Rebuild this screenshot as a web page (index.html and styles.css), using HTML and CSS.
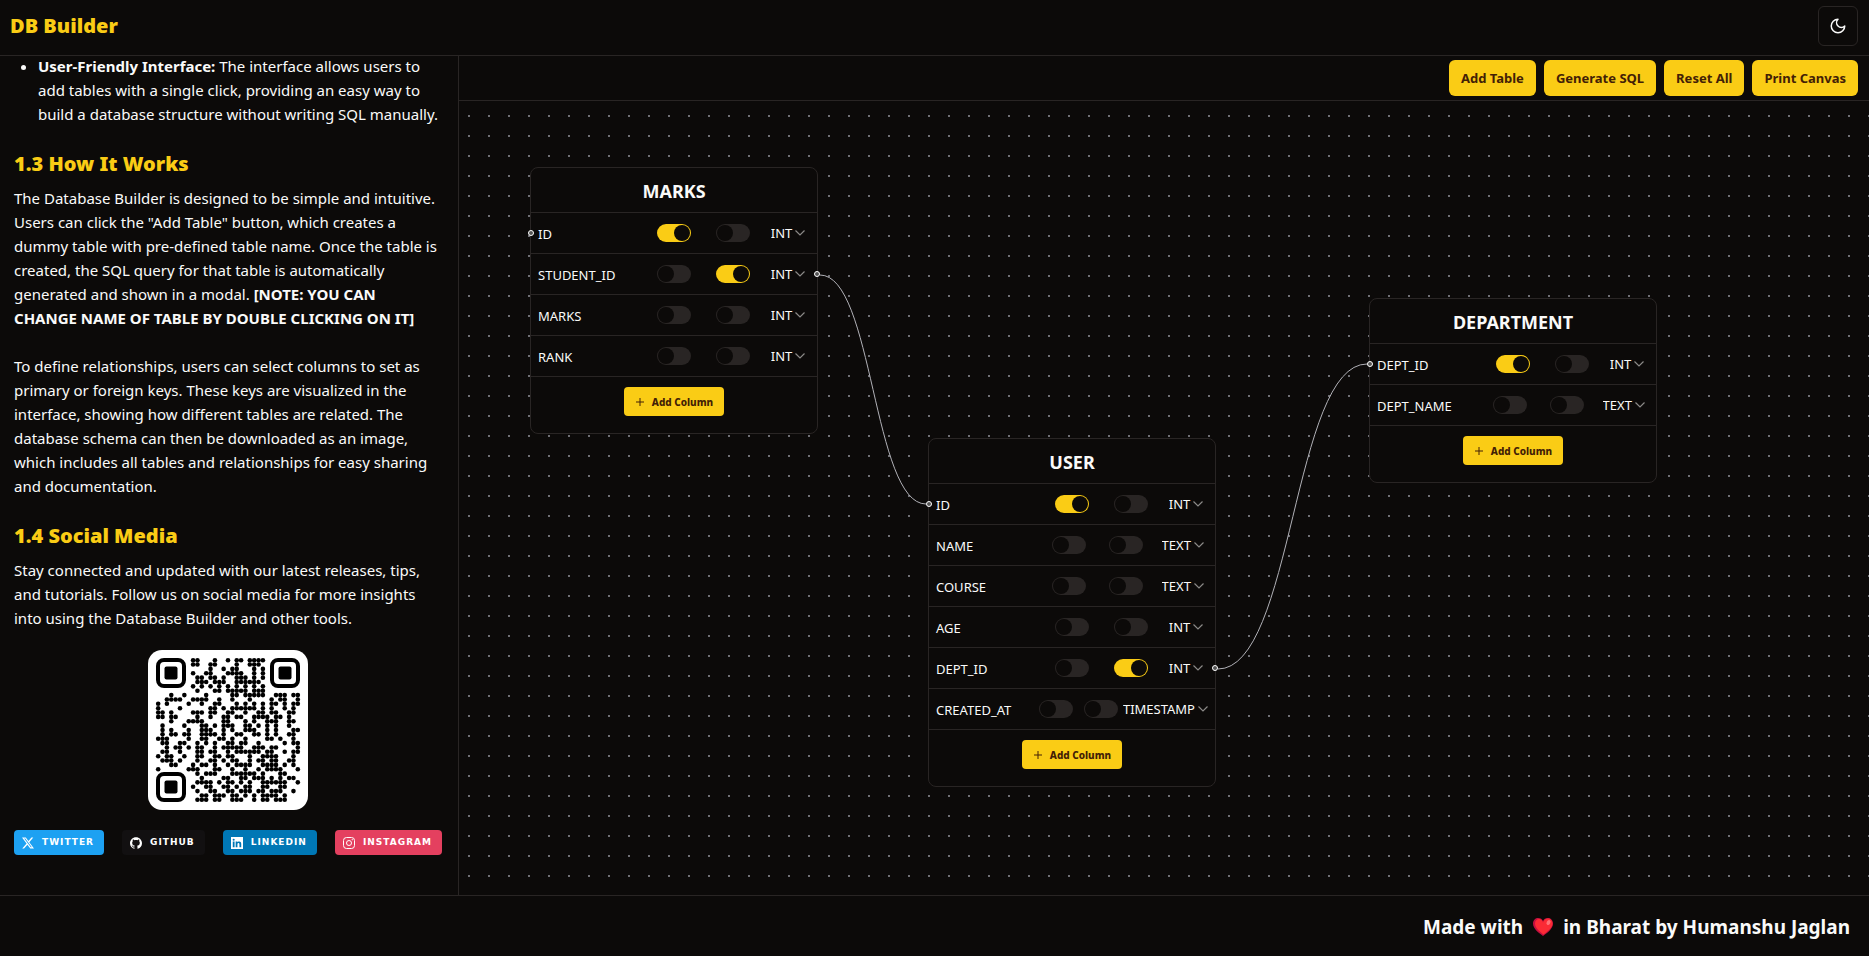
FILE: index.html
```html
<!DOCTYPE html>
<html lang="en">
<head>
<meta charset="utf-8">
<title>DB Builder</title>
<link rel="stylesheet" href="styles.css">
</head>
<body>
<svg class="sprite" aria-hidden="true">
  <symbol id="chevron" viewBox="0 0 10 6"><path d="M.5 .5l4.500 4.500 4.500-4.500" fill="none" stroke="currentColor" stroke-width="1.200"/></symbol>
  <symbol id="plus" viewBox="0 0 8 8"><path d="M4 0v8M0 4h8" fill="none" stroke="currentColor"/></symbol>
</svg>

<header class="topbar">
  <h1 class="brand">DB Builder</h1>
  <button class="theme-button" type="button" aria-label="Toggle theme">
    <svg width="18" height="18" viewBox="0 0 24 24" fill="none" stroke="currentColor" stroke-width="2" stroke-linecap="round" stroke-linejoin="round"><path d="M12 3a6 6 0 0 0 9 9 9 9 0 1 1-9-9Z"/></svg>
  </button>
</header>

<main class="workspace">
  <aside class="docs">
    <ul class="docs-list">
      <li><strong>User-Friendly Interface:</strong> The interface allows users to<br>add tables with a single click, providing an easy way to<br>build a database structure without writing SQL manually.</li>
    </ul>
    <section class="docs-section">
      <h2 class="docs-title">1.3 How It Works</h2>
      <p class="docs-text">The Database Builder is designed to be simple and intuitive.<br>Users can click the "Add Table" button, which creates a<br>dummy table with pre-defined table name. Once the table is<br>created, the SQL query for that table is automatically<br>generated and shown in a modal. <strong>[NOTE: YOU CAN<br>CHANGE NAME OF TABLE BY DOUBLE CLICKING ON IT]</strong></p>
      <p class="docs-text docs-text-next">To define relationships, users can select columns to set as<br>primary or foreign keys. These keys are visualized in the<br>interface, showing how different tables are related. The<br>database schema can then be downloaded as an image,<br>which includes all tables and relationships for easy sharing<br>and documentation.</p>
    </section>
    <section class="docs-section">
      <h2 class="docs-title">1.4 Social Media</h2>
      <p class="docs-text">Stay connected and updated with our latest releases, tips,<br>and tutorials. Follow us on social media for more insights<br>into using the Database Builder and other tools.</p>
    </section>
    <svg class="qr" viewBox="0 0 160 160" role="img" aria-label="QR code">
      <rect width="160" height="160" rx="14" fill="#fff"/>
      <g fill="none" stroke="#000" stroke-width="4">
        <rect x="10" y="10" width="26" height="26" rx="6"/>
        <rect x="124" y="10" width="26" height="26" rx="6"/>
        <rect x="10" y="124" width="26" height="26" rx="6"/>
      </g>
      <rect x="16.500" y="16.500" width="13" height="13" rx="2"/>
      <rect x="130.500" y="16.500" width="13" height="13" rx="2"/>
      <rect x="16.500" y="130.500" width="13" height="13" rx="2"/>
      <g id="qr-dots"></g>
    </svg>
    <nav class="social" aria-label="Social media">
      <a class="badge twitter" href="#twitter"><svg viewBox="0 0 24 24"><path fill="currentColor" d="M18.901 1.153h3.680l-8.040 9.190L24 22.846h-7.406l-5.800-7.584-6.638 7.584H.474l8.600-9.830L0 1.154h7.594l5.243 6.932ZM17.610 20.644h2.039L6.486 3.240H4.298Z"/></svg>TWITTER</a>
      <a class="badge github" href="#github"><svg viewBox="0 0 24 24"><path fill="currentColor" d="M12 .297c-6.630 0-12 5.373-12 12 0 5.303 3.438 9.800 8.205 11.385.6.113.82-.258.82-.577 0-.285-.010-1.040-.015-2.040-3.338.724-4.042-1.610-4.042-1.610C4.422 18.070 3.633 17.700 3.633 17.700c-1.087-.744.084-.729.084-.729 1.205.084 1.838 1.236 1.838 1.236 1.070 1.835 2.809 1.305 3.495.998.108-.776.417-1.305.76-1.605-2.665-.3-5.466-1.332-5.466-5.930 0-1.310.465-2.380 1.235-3.220-.135-.303-.540-1.523.105-3.176 0 0 1.005-.322 3.300 1.230.96-.267 1.980-.399 3-.405 1.020.006 2.040.138 3 .405 2.280-1.552 3.285-1.230 3.285-1.230.645 1.653.24 2.873.12 3.176.765.84 1.230 1.910 1.230 3.220 0 4.610-2.805 5.625-5.475 5.920.42.36.81 1.096.81 2.220 0 1.606-.015 2.896-.015 3.286 0 .315.21.69.825.570C20.565 22.092 24 17.592 24 12.297c0-6.627-5.373-12-12-12"/></svg>GITHUB</a>
      <a class="badge linkedin" href="#linkedin"><svg viewBox="0 0 24 24"><path fill="currentColor" fill-rule="evenodd" d="M0 0h24v24H0ZM3.560 9v11.450h3.570V9ZM5.340 3.300a2.060 2.060 0 1 0 0 4.130 2.060 2.060 0 0 0 0-4.130ZM9.350 9v11.450h3.560v-5.600c0-1.500.3-2.900 2.100-2.900s1.880 1.700 1.880 3v5.500h3.560v-6.300c0-3.100-.7-5.400-4.270-5.400-1.700 0-2.900.9-3.370 1.800V9Z"/></svg>LINKEDIN</a>
      <a class="badge instagram" href="#instagram"><svg viewBox="0 0 24 24" fill="none" stroke="currentColor" stroke-width="2"><rect x="1" y="1" width="22" height="22" rx="6"/><circle cx="12" cy="12" r="5"/><circle cx="18.400" cy="5.600" r=".6"/></svg>INSTAGRAM</a>
    </nav>
  </aside>

  <section class="builder">
    <div class="toolbar">
      <button class="button" type="button">Add Table</button>
      <button class="button" type="button">Generate SQL</button>
      <button class="button" type="button">Reset All</button>
      <button class="button" type="button">Print Canvas</button>
    </div>
    <div class="canvas">
      <svg class="grid-dots" aria-hidden="true">
        <defs><pattern id="dots" width="20" height="20" patternUnits="userSpaceOnUse"><rect x="9" y="14" width="2" height="2" fill="#707075"/></pattern></defs>
        <rect width="100%" height="100%" fill="url(#dots)"/>
        <g fill="none" stroke="#b1b1b7">
          <path d="M361 174C414 174 414 403 467 403"/>
          <path d="M759 568C834 568 834 263 908 263"/>
        </g>
      </svg>

      <article class="node node-marks">
        <h3 class="node-title">MARKS</h3>
        <ul class="columns">
          <li class="column" data-handle="left" data-keys="p" data-type="INT">ID</li>
          <li class="column" data-handle="right" data-keys="f" data-type="INT">STUDENT_ID</li>
          <li class="column" data-keys="" data-type="INT">MARKS</li>
          <li class="column" data-keys="" data-type="INT">RANK</li>
        </ul>
        <div class="node-actions"><button class="add-column" type="button"><svg width="8" height="8"><use href="#plus"/></svg>Add Column</button></div>
      </article>

      <article class="node node-user">
        <h3 class="node-title">USER</h3>
        <ul class="columns">
          <li class="column" data-handle="left" data-keys="p" data-type="INT">ID</li>
          <li class="column" data-keys="" data-type="TEXT">NAME</li>
          <li class="column" data-keys="" data-type="TEXT">COURSE</li>
          <li class="column" data-keys="" data-type="INT">AGE</li>
          <li class="column" data-handle="right" data-keys="f" data-type="INT">DEPT_ID</li>
          <li class="column" data-keys="" data-type="TIMESTAMP">CREATED_AT</li>
        </ul>
        <div class="node-actions"><button class="add-column" type="button"><svg width="8" height="8"><use href="#plus"/></svg>Add Column</button></div>
      </article>

      <article class="node node-department">
        <h3 class="node-title">DEPARTMENT</h3>
        <ul class="columns">
          <li class="column" data-handle="left" data-keys="p" data-type="INT">DEPT_ID</li>
          <li class="column" data-keys="" data-type="TEXT">DEPT_NAME</li>
        </ul>
        <div class="node-actions"><button class="add-column" type="button"><svg width="8" height="8"><use href="#plus"/></svg>Add Column</button></div>
      </article>
    </div>
  </section>
</main>

<footer class="footer">
  <span>Made with</span>
  <svg class="heart" viewBox="0 0 20 18" role="img" aria-label="love"><path d="M10 18C6 15 0 11 0 5.500 0 2 2.500 0 5.200 0 7.500 0 9.200 1.200 10 3 10.800 1.200 12.500 0 14.800 0 17.500 0 20 2 20 5.500 20 11 14 15 10 18Z" fill="#c50f3f"/><path d="M10.500 16.500C7 14 2 10 2 5.500 2 2.500 4 1 6 1 8 1 9.500 2.500 10 4.500 11 2 12.500.5 15 .5 17.500.5 19.500 2.500 19.500 5.500 19.500 10 14 14 10.500 16.500Z" fill="#fb2b35"/><ellipse cx="15.500" cy="4.500" rx="1.800" ry="2.600" transform="rotate(30 15.500 4.500)" fill="#ff7277"/></svg>
  <span>in Bharat by Humanshu Jaglan</span>
</footer>
<script src="script.js"></script>
</body>
</html>
```

FILE: styles.css
```css
:root {
  --bg: #0c0a09;
  --line: #292524;
  --text: #fafaf9;
  --accent: #facc15;
  --accent-text: #422006;
}

* { box-sizing: border-box; }

body {
  margin: 0;
  height: 100vh;
  display: flex;
  flex-direction: column;
  background: var(--bg);
  color: var(--text);
  font: 15px/24px "Noto Sans", "Open Sans", sans-serif;
}

h1, h2, h3, p, ul { margin: 0; padding: 0; }
button, select { font-family: inherit; }
.sprite { display: none; }

.topbar {
  display: flex;
  align-items: center;
  justify-content: space-between;
  padding: 6px 11px 9px 10px;
  border-bottom: 1px solid var(--line);
}
.brand { color: var(--accent); font-size: 20px; font-weight: 900; line-height: 28px; }
.theme-button {
  display: grid;
  place-items: center;
  width: 40px;
  height: 40px;
  border: 1px solid var(--line);
  border-radius: 6px;
  background: none;
  color: var(--text);
}

.workspace { flex: 1; min-height: 0; display: flex; }

.docs {
  flex: 0 0 24.56%;
  overflow: hidden;
  padding: 0 16px 0 14px;
  border-right: 1px solid var(--line);
  white-space: nowrap;
}
.docs-list { margin-top: -2px; padding-left: 24px; }
.docs-section { margin-top: 24px; }
.docs-title { color: var(--accent); font-size: 20px; font-weight: 900; line-height: 28px; margin-bottom: 8px; }
.docs-text-next { margin-top: 24px; }
.qr { display: block; width: 160px; height: 160px; margin: 20px auto; }
.social { display: flex; justify-content: space-between; }
.badge {
  display: flex;
  align-items: center;
  gap: 8px;
  height: 25px;
  padding: 0 10px 0 8px;
  border-radius: 4px;
  color: #fff;
  font: bold 9px/25px "DejaVu Sans", sans-serif;
  letter-spacing: 1px;
  text-decoration: none;
}
.badge svg { width: 12px; height: 12px; }
.twitter { background: #1da1f2; }
.github { background: #121011; }
.linkedin { background: #0077b5; }
.instagram { background: #e4405f; }

.builder { flex: 1; min-width: 0; display: flex; flex-direction: column; }
.toolbar {
  display: flex;
  justify-content: flex-end;
  gap: 8px;
  padding: 4px 11px;
  border-bottom: 1px solid var(--line);
}
.button {
  height: 36px;
  padding: 0 12px;
  border: 0;
  border-radius: 6px;
  background: var(--accent);
  color: var(--accent-text);
  font-size: 13px;
  font-weight: 700;
}

.canvas { position: relative; flex: 1; overflow: hidden; }
.grid-dots { position: absolute; inset: 0; width: 100%; height: 100%; }

.node {
  position: absolute;
  width: 288px;
  border: 1px solid var(--line);
  border-radius: 8px;
  background: var(--bg);
}
.node-marks { left: 71px; top: 66px; }
.node-user { left: 469px; top: 337px; }
.node-department { left: 910px; top: 197px; }
.node-title {
  padding: 9px 0 7px;
  border-bottom: 1px solid var(--line);
  font-size: 18px;
  font-weight: 700;
  line-height: 28px;
  text-align: center;
}
.columns { list-style: none; }
.column {
  position: relative;
  display: grid;
  grid-template-columns: 98px 3fr 44px 3fr 44px 3fr auto 1fr;
  align-items: center;
  height: 41px;
  padding: 0 7px 0 7px;
  border-bottom: 1px solid var(--line);
  font-size: 13px;
}
.column-name { padding-top: 2px; }
.toggle {
  appearance: none;
  justify-self: center;
  display: flex;
  width: 34px;
  height: 18px;
  margin: 0;
  padding: 1px;
  border-radius: 9px;
  background: #292524;
}
.toggle::before { content: ""; width: 16px; height: 16px; border-radius: 50%; background: var(--bg); }
.toggle:checked { background: var(--accent); justify-content: flex-end; }
.primary { grid-column: 3; }
.foreign { grid-column: 5; }
.type { grid-column: 7; display: flex; align-items: center; gap: 2px; color: #8b8987; }
.type select {
  appearance: none;
  padding: 0;
  border: 0;
  background: none;
  color: var(--text);
  font-size: 13px;
}
.handle {
  position: absolute;
  top: 17px;
  width: 6px;
  height: 6px;
  border: 1px solid #fff;
  border-radius: 50%;
  background: #555;
}
.handle-left { left: -3px; }
.handle-right { right: -3px; }
.node-actions { padding: 10px 0 17px; display: flex; justify-content: center; }
.add-column {
  display: flex;
  align-items: center;
  gap: 8px;
  height: 29px;
  padding: 0 11px 0 12px;
  border: 0;
  border-radius: 4px;
  background: var(--accent);
  color: var(--accent-text);
  font-size: 10px;
  font-weight: 800;
}

.footer {
  display: flex;
  align-items: center;
  justify-content: flex-end;
  gap: 10px;
  height: 61px;
  padding: 2px 19px 0;
  border-top: 1px solid var(--line);
  font-size: 19px;
  font-weight: 700;
}
.heart { width: 20px; height: 18px; }
```

FILE: script.js
```js
const SVG = "http://www.w3.org/2000/svg";

// One string per row of the code; '#' is a filled module, finders are drawn in the markup.
const rows = [
  "........##...#..#.##.####........",
  "........##..##....#..###.........",
  "............#..#.##...#.#........",
  "........#..##...####..#.#........",
  ".........##.##.#..###.#.#........",
  ".........###.###..######.........",
  "........#.#.#.#.#.#.#.#.#........",
  ".........#...##.#####.###........",
  "...#..#....#.....##.#####..###.##",
  "..####..####..#..#...#....#.##..#",
  "#.#....#..#..##...#.#.#.#.##.#.##",
  "#....#......##.#.######.#.#..#.#.",
  "##.#....###.##..##..#..##.##..##.",
  "##.##....#..#..##.##..####.##.#..",
  "...#...####....##...#.#..###..##.",
  ".#....#...##.#.###..##.#.#.#..#..",
  ".#.#...#..###..#.#..###..#.#...##",
  ".#.##.##..####.#..##..##.#.#..##.",
  "###....#..##..##.#..#....##.#..#.",
  ".##..##..#.#.#..##.##..#.....#.##",
  "..#.##.#.##..#.#####..###.##....#",
  ".##..#...##.##..#.######.##..#.##",
  "#.##..#..##..##.##...#..####...#.",
  ".###.#...#..##.#.##..#.##.##..##.",
  "...##...#.##.#..#.####..####.#.#.",
  "#......###...##..#..#..#.####...#",
  ".........#.###...######.#...##...",
  "..........#....##..##.###.#.#.##.",
  ".........####.#.##.#.#..######..#",
  "........#..##..##.#.##..##..##...",
  ".........#..##..##.###.##.###..#.",
  "..........##.###.##.#.#.####.#...",
  ".........###.##..###..#.##.###..."
];

const dots = document.getElementById("qr-dots");
const step = 144 / 33;
rows.forEach((row, y) => [...row].forEach((cell, x) => {
  if (cell !== "#") return;
  const dot = document.createElementNS(SVG, "circle");
  dot.setAttribute("cx", 8 + (x + 0.5) * step);
  dot.setAttribute("cy", 8 + (y + 0.5) * step);
  dot.setAttribute("r", 2.3);
  dots.append(dot);
}));

// Fill each column row with its key switches, type menu and connection handle.
document.querySelectorAll(".column").forEach((column) => {
  const { keys, type, handle } = column.dataset;
  const name = column.textContent;
  const checked = (key) => (keys.includes(key) ? "checked" : "");
  column.innerHTML = `
    <span class="column-name">${name}</span>
    <input class="toggle primary" type="checkbox" role="switch" aria-label="${name} primary key" ${checked("p")}>
    <input class="toggle foreign" type="checkbox" role="switch" aria-label="${name} foreign key" ${checked("f")}>
    <span class="type"><select aria-label="${name} type"><option>${type}</option></select><svg width="10" height="6"><use href="#chevron"/></svg></span>
    ${handle ? `<span class="handle handle-${handle}"></span>` : ""}`;
});
```
